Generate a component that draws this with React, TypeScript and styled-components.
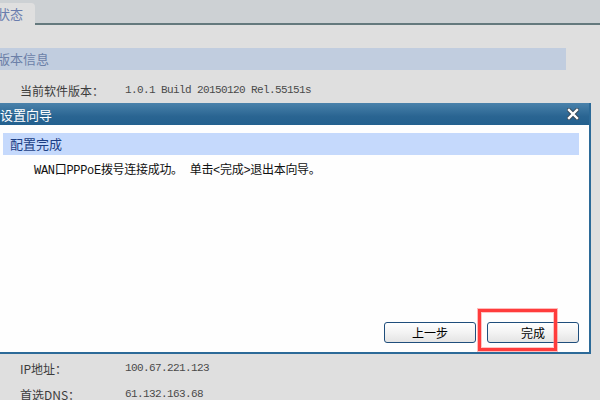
import React from 'react';
import styled, {createGlobalStyle} from 'styled-components';

const cjk = '"Noto Sans CJK SC", "Noto Sans", sans-serif';
const mono = '"Liberation Mono", "Noto Sans CJK SC", monospace';

const GlobalStyle = createGlobalStyle`
    html, body {
        margin: 0;
        background: #dfdfdf;
        overflow: hidden;
    }
    #root {
        position: relative;
        width: 600px;
        height: 400px;
        overflow: hidden;
        font-family: ${cjk};
    }
`;

type Row = {label: string; value: string};
type Section = {title: string; rows: Row[]};

const sections: Section[] = [
    {
        title: '版本信息',
        rows: [
            {label: '当前软件版本：', value: '1.0.1 Build 20150120 Rel.55151s'},
            {label: '当前硬件版本：', value: 'WR842N 5.0 00000000'},
        ],
    },
    {
        title: 'LAN口状态',
        rows: [
            {label: 'MAC地址：', value: '50-BD-5F-1A-2B-3C'},
            {label: 'IP地址：', value: '192.168.1.1'},
            {label: '子网掩码：', value: '255.255.255.0'},
        ],
    },
    {
        title: 'WAN口状态',
        rows: [
            {label: 'MAC地址：', value: '50-BD-5F-1A-2B-3D'},
            {label: 'IP地址：', value: '100.67.221.123'},
            {label: '首选DNS：', value: '61.132.163.68'},
            {label: '备用DNS：', value: '218.2.135.1'},
        ],
    },
];

const CloseIcon = () => (
    <svg width="12" height="12" viewBox="0 0 12 12">
        <path d="M2 2 L10 10 M10 2 L2 10" stroke="#3a4a58" strokeWidth="4.2" strokeLinecap="square"/>
        <path d="M2 2 L10 10 M10 2 L2 10" stroke="#ffffff" strokeWidth="2.4" strokeLinecap="square"/>
    </svg>
);

export default function App() {
    return (
        <>
            <GlobalStyle/>
            <Page>
                <TopStrip>
                    <Tab>状态</Tab>
                </TopStrip>
                {sections.map((s) => (
                    <SectionBlock key={s.title}>
                        <SectionBand>{s.title}</SectionBand>
                        <RowList>
                            {s.rows.map((r) => (
                                <InfoRow key={r.label}>
                                    <Label>{r.label}</Label>
                                    <Value>{r.value}</Value>
                                </InfoRow>
                            ))}
                        </RowList>
                    </SectionBlock>
                ))}
            </Page>

            <Dialog>
                <TitleBar>
                    <span>设置向导</span>
                    <CloseIcon/>
                </TitleBar>
                <DialogBody>
                    <StepBand>配置完成</StepBand>
                    <Message>WAN口PPPoE拨号连接成功。 单击&lt;完成&gt;退出本向导。</Message>
                    <Footer>
                        <WizardButton>上一步</WizardButton>
                        <WizardButton>完成</WizardButton>
                    </Footer>
                </DialogBody>
            </Dialog>

            <Highlight/>
        </>
    );
}

const Page = styled.div`
    margin-left: -10px;
`;

const TopStrip = styled.div`
    display: flex;
    align-items: flex-end;
    height: 25px;
    padding-top: 3px;
    box-sizing: border-box;
    background: #cdd1d4;
    box-shadow: inset 0 -2px 0 #64797d;
`;

const Tab = styled.div`
    width: 45px;
    height: 22px;
    box-sizing: border-box;
    padding-left: 7px;
    background: #dfdfdf;
    border-top-right-radius: 4px;
    color: #6a7dae;
    font-size: 13px;
    line-height: 22px;
`;

const SectionBlock = styled.section`
    margin-top: 23px;
`;

const SectionBand = styled.div`
    width: 576px;
    height: 22px;
    padding-left: 7px;
    box-sizing: border-box;
    background: #c1cddf;
    color: #6c80a8;
    font-size: 13px;
    line-height: 22px;
`;

const RowList = styled.div`
    padding: 7px 0 9px;
`;

const InfoRow = styled.div`
    display: flex;
    align-items: center;
    height: 26px;
    padding-left: 30px;
`;

const Label = styled.span`
    width: 105px;
    color: #3c3c3c;
    font-size: 12px;
`;

const Value = styled.span`
    font-family: ${mono};
    font-size: 11px;
    letter-spacing: -0.6px;
    color: #4a4a4a;
`;

const Dialog = styled.div`
    position: absolute;
    top: 103px;
    left: -3px;
    width: 594px;
    height: 251px;
    box-sizing: border-box;
    display: flex;
    flex-direction: column;
    background: #fefefe;
    border: 2px solid #2c6a98;
    border-top: 0;
`;

const TitleBar = styled.div`
    display: flex;
    align-items: center;
    justify-content: space-between;
    height: 22px;
    padding: 0 10px 0 1px;
    background: linear-gradient(#4a82ab, #2a6592 60%, #23608e);
    color: #ffffff;
    font-size: 13px;
`;

const DialogBody = styled.div`
    flex: 1;
    display: flex;
    flex-direction: column;
`;

const StepBand = styled.div`
    margin: 8px 10px 0 4px;
    height: 22px;
    padding-left: 7px;
    background: #c5d9fc;
    color: #1c3f86;
    font-size: 13px;
    line-height: 22px;
`;

const Message = styled.div`
    margin-top: 5px;
    padding-left: 35px;
    line-height: 22px;
    font-family: ${mono};
    font-size: 12px;
    letter-spacing: -0.3px;
    color: #111111;
    white-space: pre;
`;

const Footer = styled.div`
    margin-top: auto;
    display: flex;
    justify-content: flex-end;
    gap: 11px;
    padding: 0 10px 9px;
`;

const WizardButton = styled.button`
    width: 92px;
    height: 21px;
    box-sizing: border-box;
    padding: 0;
    border: 1px solid #1f4e7c;
    border-radius: 3px;
    background: linear-gradient(#ffffff, #f3f3f3 50%, #e4e4e4);
    color: #000000;
    font-family: ${cjk};
    font-size: 12px;
    line-height: 19px;
`;

const Highlight = styled.div`
    position: absolute;
    left: 478px;
    top: 309px;
    width: 79px;
    height: 42px;
    box-sizing: border-box;
    border: 3px solid #ff3c3c;
    box-shadow: 0 0 0 1px rgba(255, 120, 120, 0.5), inset 0 0 0 1px rgba(255, 140, 140, 0.5);
`;
